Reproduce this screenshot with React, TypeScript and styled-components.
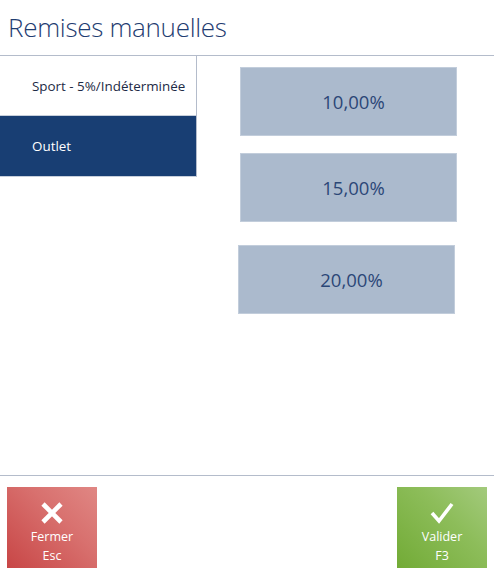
import React from "react";
import styled, { createGlobalStyle, css } from "styled-components";

const GlobalStyle = createGlobalStyle`
  html, body {
    margin: 0;
    padding: 0;
    background: #ffffff;
    font-family: "Open Sans", "Noto Sans", "Liberation Sans", sans-serif;
  }
`;

const Page = styled.div`
  width: 494px;
  height: 577px;
  display: flex;
  flex-direction: column;
  overflow: hidden;
`;

const Header = styled.header`
  height: 56px;
  border-bottom: 1px solid #b4bccb;
  display: flex;
  align-items: center;
  padding-left: 8px;
  padding-bottom: 1px;
  box-sizing: border-box;
`;

const Title = styled.h1`
  margin: 0;
  font-size: 26px;
  font-weight: 300;
  color: #1f3d72;
  letter-spacing: -0.3px;
`;

const Main = styled.main`
  flex: 1;
  display: flex;
  align-items: flex-start;
`;

const SideList = styled.ul`
  list-style: none;
  margin: 0;
  padding: 0;
  width: 196px;
  border-right: 1px solid #b4bccb;
  border-bottom: 1px solid #c7cfdb;
`;

const SideItem = styled.li<{ active?: boolean }>`
  height: 60px;
  display: flex;
  align-items: center;
  padding-left: 32px;
  font-size: 13.4px;
  ${({ active }) =>
    active
      ? css`
          background: #183e73;
          color: #ffffff;
          font-weight: 500;
        `
      : css`
          background: #ffffff;
          color: #1d2a45;
          border-bottom: 1px solid #c7cfdb;
          height: 59px;
        `};
`;

const Tiles = styled.div`
  display: flex;
  flex-direction: column;
  padding-top: 11px;
  padding-left: 43px;
`;

const Tile = styled.button<{ top: number; shift?: number }>`
  width: 217px;
  height: 69px;
  margin-top: ${({ top }) => top}px;
  margin-left: ${({ shift = 0 }) => shift}px;
  background: #abbacd;
  border: 1px solid #c2cddb;
  color: #2b4777;
  font-family: inherit;
  font-size: 18.5px;
  padding: 0 0 0 10px;
  cursor: pointer;
`;

const Footer = styled.footer`
  height: 102px;
  border-top: 1px solid #b4bccb;
  display: flex;
  justify-content: space-between;
  align-items: flex-start;
  padding: 11px 7px 0;
  box-sizing: border-box;
`;

const ActionButton = styled.button<{ tone: "red" | "green" }>`
  width: 90px;
  height: 81px;
  border: none;
  padding: 14px 0 0;
  display: flex;
  flex-direction: column;
  align-items: center;
  color: #ffffff;
  font-family: inherit;
  font-size: 12.5px;
  line-height: 19px;
  cursor: pointer;
  background: ${({ tone }) =>
    tone === "red"
      ? "linear-gradient(45deg, #c84646 0%, #d8706e 60%, #e08784 100%)"
      : "linear-gradient(45deg, #72ab36 0%, #8dbd5a 60%, #a3ca7c 100%)"};

  svg {
    margin-bottom: 2px;
  }
`;

const CloseIcon = () => (
  <svg width="24" height="24" viewBox="0 0 24 24">
    <path d="M3 3 L21 21 M21 3 L3 21" stroke="#fff" strokeWidth="4.6" fill="none" />
  </svg>
);

const CheckIcon = () => (
  <svg width="24" height="24" viewBox="0 0 24 24">
    <path d="M2 12 L9 20 L22 3" stroke="#fff" strokeWidth="3.6" fill="none" />
  </svg>
);

const categories = [
  { label: "Sport - 5%/Indéterminée", active: false },
  { label: "Outlet", active: true },
];

const discounts = [
  { value: "10,00%", top: 0, shift: 0 },
  { value: "15,00%", top: 17, shift: 0 },
  { value: "20,00%", top: 23, shift: -2 },
];

export default function App() {
  return (
    <Page>
      <GlobalStyle />
      <Header>
        <Title>Remises manuelles</Title>
      </Header>
      <Main>
        <SideList>
          {categories.map((c) => (
            <SideItem key={c.label} active={c.active}>
              {c.label}
            </SideItem>
          ))}
        </SideList>
        <Tiles>
          {discounts.map((d) => (
            <Tile key={d.value} top={d.top} shift={d.shift}>
              {d.value}
            </Tile>
          ))}
        </Tiles>
      </Main>
      <Footer>
        <ActionButton tone="red">
          <CloseIcon />
          <span>Fermer</span>
          <span>Esc</span>
        </ActionButton>
        <ActionButton tone="green">
          <CheckIcon />
          <span>Valider</span>
          <span>F3</span>
        </ActionButton>
      </Footer>
    </Page>
  );
}
